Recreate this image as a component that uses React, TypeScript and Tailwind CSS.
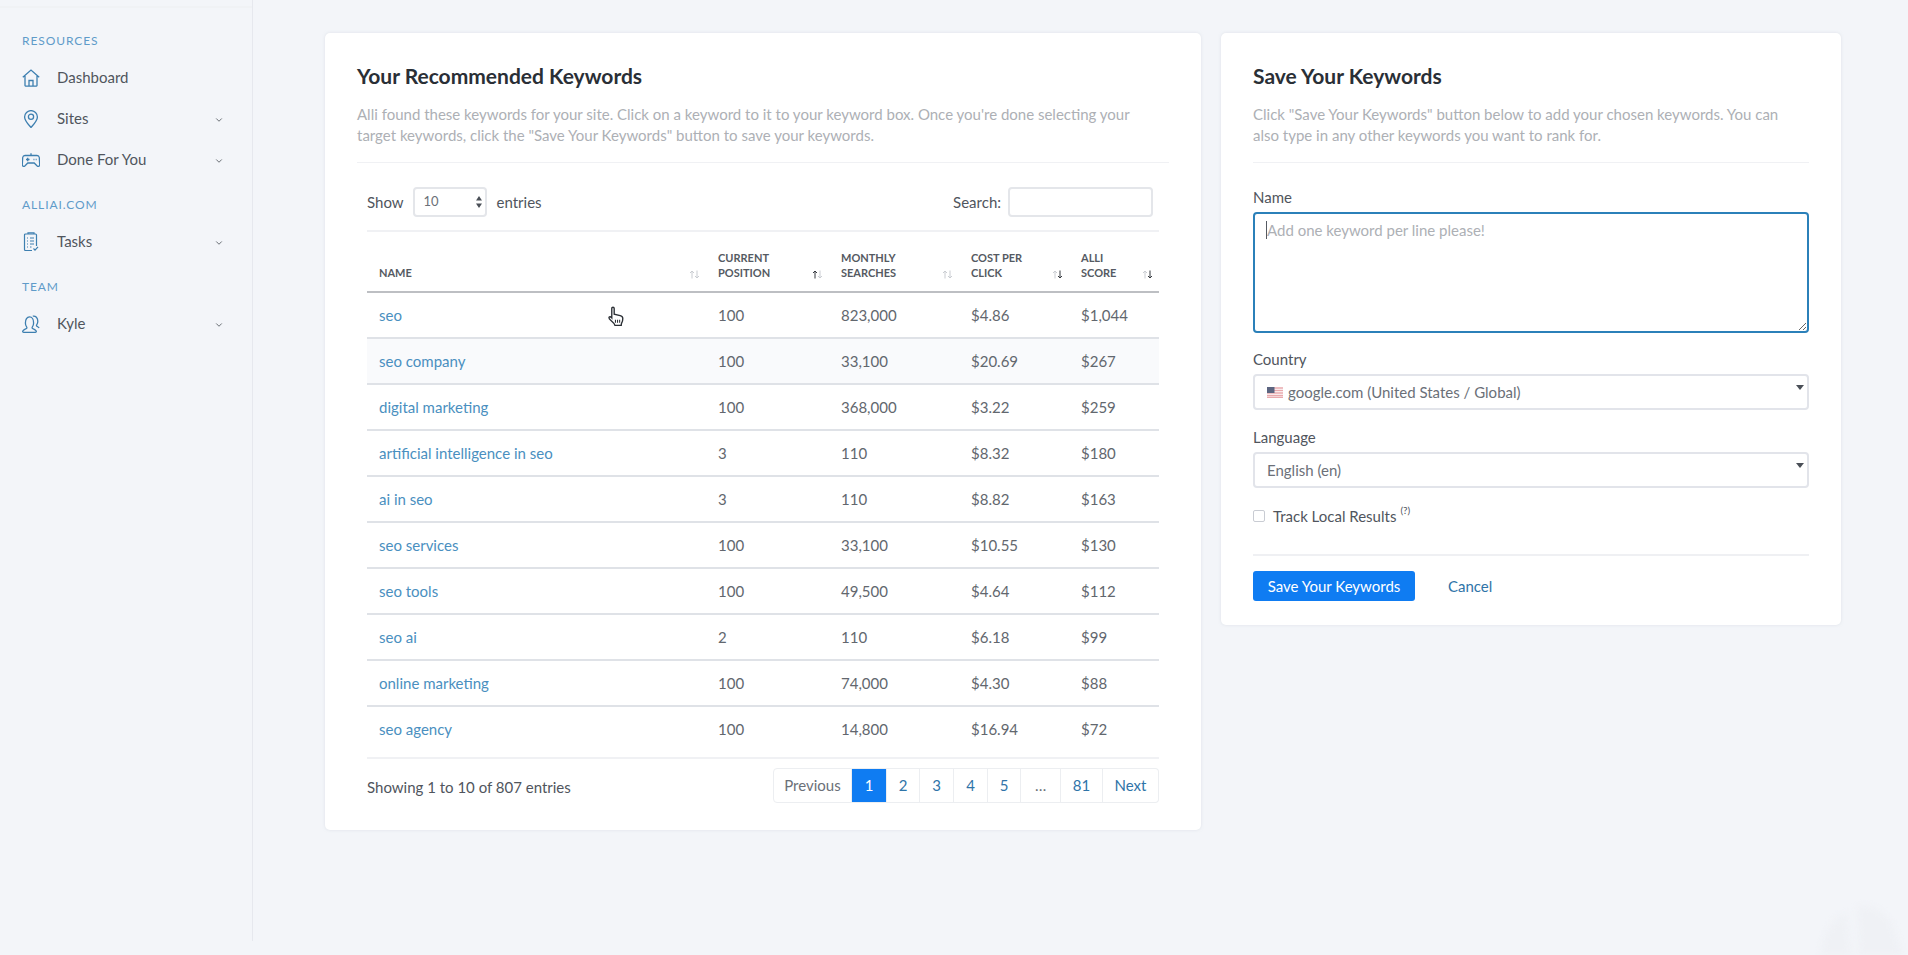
import { ChevronDown } from "lucide-react";

const rows = [
  ["seo", "100", "823,000", "$4.86", "$1,044"],
  ["seo company", "100", "33,100", "$20.69", "$267"],
  ["digital marketing", "100", "368,000", "$3.22", "$259"],
  ["artificial intelligence in seo", "3", "110", "$8.32", "$180"],
  ["ai in seo", "3", "110", "$8.82", "$163"],
  ["seo services", "100", "33,100", "$10.55", "$130"],
  ["seo tools", "100", "49,500", "$4.64", "$112"],
  ["seo ai", "2", "110", "$6.18", "$99"],
  ["online marketing", "100", "74,000", "$4.30", "$88"],
  ["seo agency", "100", "14,800", "$16.94", "$72"],
];

const pages = [
  { label: "Previous", width: "w-[79px]", className: "text-[#6b7078] rounded-l-[4px]" },
  { label: "1", width: "w-[35px]", className: "bg-[#0f7cf2] text-white border-[#0f7cf2]" },
  { label: "2", width: "w-[33px]", className: "text-[#2f74a8]" },
  { label: "3", width: "w-[34px]", className: "text-[#2f74a8]" },
  { label: "4", width: "w-[34px]", className: "text-[#2f74a8]" },
  { label: "5", width: "w-[33px]", className: "text-[#2f74a8]" },
  { label: "…", width: "w-[40px]", className: "text-[#6b7078]" },
  { label: "81", width: "w-[42px]", className: "text-[#2f74a8]" },
  { label: "Next", width: "w-[56px]", className: "text-[#2f74a8] rounded-r-[4px]" },
];

function SortArrows({ up = "#c9ccd1", down = "#c9ccd1" }: { up?: string; down?: string }) {
  return (
    <svg width="11" height="9" viewBox="0 0 11 9" fill="none" strokeWidth="1" className="shrink-0 mb-[1px]">
      <path d="M3 8.5V1M1 3l2-2 2 2" stroke={up} />
      <path d="M8 .5V8M6 6l2 2 2-2" stroke={down} />
    </svg>
  );
}

const iconClass = "shrink-0 text-[#3d7fb0]";

function HomeIcon() {
  return (
    <svg width="18" height="18" viewBox="0 0 18 18" fill="none" stroke="currentColor" strokeWidth="1.3" className={iconClass}>
      <path d="M.8 8.2 9 1l8.2 7.2M3 7v9.6c0 .3.2.5.5.5h11c.3 0 .5-.2.5-.5V7" />
      <path d="M7 17v-5.5h4V17" />
    </svg>
  );
}

function PinIcon() {
  return (
    <svg width="18" height="18" viewBox="0 0 18 18" fill="none" stroke="currentColor" strokeWidth="1.3" className={iconClass}>
      <path d="M9 17.500C6.500 14.600 2.600 10.600 2.600 6.900A6.400 6.400 0 0 1 9 .6a6.400 6.400 0 0 1 6.400 6.300c0 3.700-3.900 7.700-6.400 10.600Z" />
      <circle cx="9" cy="6.800" r="2.600" />
    </svg>
  );
}

function GamepadIcon() {
  return (
    <svg width="18" height="16" viewBox="0 0 18 16" fill="none" stroke="currentColor" strokeWidth="1.3" className={iconClass}>
      <path d="M3 3.500h12c1.300 0 2.100.8 2.300 2l.4 7.300c.1 1.400-1.500 2-2.500 1.100l-3-2.900H5.800l-3 2.900c-1 .9-2.600.3-2.500-1.100l.4-7.300c.2-1.200 1-2 2.300-2Z" />
      <path d="M9 3.500V1.200M4 7.500h3.500M5.700 5.800v3.400M11.500 7.500h.9M13.700 7.500h.9" />
    </svg>
  );
}

function TasksIcon() {
  return (
    <svg width="18" height="20" viewBox="0 0 18 20" fill="none" stroke="currentColor" strokeWidth="1.2" className={iconClass}>
      <path d="M10 18.500H3.500a1 1 0 0 1-1-1V3a1 1 0 0 1 1-1h10a1 1 0 0 1 1 1v11" />
      <path d="M6 2V.8h6V2M5 6h1M8 6h4M5 9h1M8 9h4M5 12h1M8 12h4M5 15h1M8 15h1.500" />
      <path d="m11.500 16.500 1.500 1.600 3-3.300" />
    </svg>
  );
}

function UserIcon() {
  return (
    <svg width="18" height="18" viewBox="0 0 18 18" fill="none" stroke="currentColor" strokeWidth="1.3" className={iconClass}>
      <path d="M6.500 17.300H1.700c-.8 0-1.200-.7-.9-1.300.7-1.400 2.300-1.800 3.700-2.500.6-.3.500-1.200.1-1.700-.8-1-1.200-2.300-1.200-3.900 0-3.200 1.500-6 4.100-6s4.100 2.800 4.100 6c0 1.600-.4 2.900-1.200 3.900-.4.500-.5 1.400.1 1.700 1.400.7 3 1.100 3.700 2.500.3.600-.1 1.300-.9 1.300H6.500Z" />
      <path d="M10.800 1.200c2.900-.6 5 1.800 5 5 0 1.500-.4 2.700-1.100 3.600-.4.500-.3 1.100.2 1.400.8.500 1.800.9 2.200 1.800" />
    </svg>
  );
}

function NavLabel({ children, className = "" }: { children: string; className?: string }) {
  return (
    <div className={`text-[12px] leading-[16px] tracking-[0.9px] text-[#5f9bc9] ${className}`}>
      {children}
    </div>
  );
}

function NavItem({ icon, label, chevron = true }: { icon: React.ReactNode; label: string; chevron?: boolean }) {
  return (
    <div className="flex items-center h-[41px] text-[15px] text-[#50555d]">
      <div className="w-[18px] flex justify-center">{icon}</div>
      <span className="ml-[17px]">{label}</span>
      {chevron && <ChevronDown size={10} strokeWidth={2.2} className="ml-auto mr-[28px] mt-[2px] text-[#5d6269]" />}
    </div>
  );
}

function Sidebar() {
  return (
    <aside className="w-[253px] h-[941px] shrink-0 border-r border-[#e6e8ee]">
      <div className="h-[8px] border-b-2 border-[#f0f2f5]" />
      <div className="pl-[22px] pt-[25px]">
        <NavLabel className="mb-[8px]">RESOURCES</NavLabel>
        <NavItem icon={<HomeIcon />} label="Dashboard" chevron={false} />
        <NavItem icon={<PinIcon />} label="Sites" />
        <NavItem icon={<GamepadIcon />} label="Done For You" />
        <NavLabel className="mt-[17px] mb-[8px]">ALLIAI.COM</NavLabel>
        <NavItem icon={<TasksIcon />} label="Tasks" />
        <NavLabel className="mt-[17px] mb-[8px]">TEAM</NavLabel>
        <NavItem icon={<UserIcon />} label="Kyle" />
      </div>
    </aside>
  );
}

function HeaderCell({ lines, up, down }: { lines: string[]; up?: string; down?: string }) {
  return (
    <th className="p-0 align-bottom font-normal">
      <div className="flex items-end justify-between pl-[12px] pr-[6px] pb-[11px]">
        <div className="text-left text-[11px] leading-[15px] font-bold text-[#555a62]">
          {lines.map((line) => (
            <div key={line}>{line}</div>
          ))}
        </div>
        <SortArrows up={up} down={down} />
      </div>
    </th>
  );
}

function KeywordsCard() {
  return (
    <section className="relative w-[876px] h-[797px] shrink-0 bg-white rounded-[5px] shadow-[0_0_3px_rgba(200,205,215,0.5)] px-[32px] pt-[29px]">
      <h2 className="text-[21px] leading-[28px] font-bold text-[#2a2f36]">Your Recommended Keywords</h2>
      <p className="mt-[14px] text-[15px] leading-[21px] text-[#adb0b5]">
        Alli found these keywords for your site. Click on a keyword to it to your keyword box. Once you're done selecting your target keywords, click the "Save Your Keywords" button to save your keywords.
      </p>
      <div className="mt-[16px] h-[1px] bg-[#f0f1f4]" />
      <div className="ml-[10px] mr-[10px]">
        <div className="flex items-center pt-[24px] pb-[13px] border-b-2 border-[#f0f1f4] text-[15px] text-[#50555d]">
          <span>Show</span>
          <div className="relative ml-[9px] mr-[10px]">
            <select
              defaultValue="10"
              className="appearance-none block w-[74px] h-[30px] pl-[9px] text-[13px] text-[#6b7078] border-2 border-[#e4e6ea] rounded-[4px] bg-white"
            >
              <option>10</option>
            </select>
            <svg width="6" height="12" viewBox="0 0 6 12" className="absolute right-[5px] top-[9px] fill-[#4a4f57]">
              <path d="M3 0l3 4.500H0zM3 12 0 7.500h6z" />
            </svg>
          </div>
          <span>entries</span>
          <span className="ml-auto">Search:</span>
          <input className="ml-[7px] mr-[6px] w-[145px] h-[30px] border-2 border-[#e4e6ea] rounded-[4px] bg-white" />
        </div>
        <table className="w-[792px] table-fixed border-collapse">
          <colgroup>
            <col className="w-[339px]" />
            <col className="w-[123px]" />
            <col className="w-[130px]" />
            <col className="w-[110px]" />
            <col className="w-[90px]" />
          </colgroup>
          <thead>
            <tr className="h-[60px] border-b-2 border-[#bdbfc3]">
              <HeaderCell lines={["NAME"]} />
              <HeaderCell lines={["CURRENT", "POSITION"]} up="#34383e" />
              <HeaderCell lines={["MONTHLY", "SEARCHES"]} />
              <HeaderCell lines={["COST PER", "CLICK"]} down="#34383e" />
              <HeaderCell lines={["ALLI", "SCORE"]} down="#34383e" />
            </tr>
          </thead>
          <tbody className="text-[15px] text-[#62676e]">
            {rows.map((row, i) => (
              <tr key={row[0]} className={`h-[46px] ${i < 9 ? "border-b-2 border-[#dfe2e7]" : ""} ${i === 1 ? "bg-[#f9fafc]" : ""}`}>
                <td className="pl-[12px] text-[#4a8fc0]">{row[0]}</td>
                {row.slice(1).map((cell, j) => (
                  <td key={j} className="pl-[12px]">
                    {cell}
                  </td>
                ))}
              </tr>
            ))}
          </tbody>
        </table>
        <div className="mt-[5px] flex items-center justify-between border-t-2 border-[#f0f1f4] pt-[9px]">
          <span className="mt-[3px] text-[15px] text-[#50555d]">Showing 1 to 10 of 807 entries</span>
          <div className="flex h-[35px] text-[15px]">
            {pages.map((page) => (
              <div
                key={page.label}
                className={`flex items-center justify-center border border-l-0 first:border-l border-[#eceef1] ${page.width} ${page.className}`}
              >
                {page.label}
              </div>
            ))}
          </div>
        </div>
      </div>
      {/* mouse cursor */}
      <svg width="17" height="21" viewBox="0 0 16 20" className="absolute left-[283px] top-[273px]" fill="#fff" stroke="#2b2f35" strokeWidth="1.300">
        <path d="M3.500 10.500V2.300c0-1.500 2.300-1.500 2.300 0v5.500l5.700 1.300c1.500.4 2.500 1.200 2.500 2.700 0 1.500-.3 3-1 4.200-.4.800-.5 1.500-.5 2.500H6.500c-.5-1.700-1.800-3-3.500-4.400-1.500-1.200-2.300-2-2.200-3 .1-1.100 1.500-1.300 2.700.2Z" />
        <path d="M7 13v3M9 13v3M11 13v3" strokeWidth="1" />
      </svg>
    </section>
  );
}

function SelectField({ label, value, flag }: { label: string; value: string; flag?: boolean }) {
  return (
    <div>
      <div className="text-[15px] leading-[20px] text-[#50555d]">{label}</div>
      <div className="relative mt-[5px] flex items-center h-[36px] pl-[12px] border-2 border-[#e2e4ea] rounded-[4px] text-[15px] text-[#6b7078]">
        {flag && (
          <svg width="16" height="11" viewBox="0 0 16 11" className="mr-[4px] shrink-0">
            <rect width="16" height="11" fill="#fff" />
            <path d="M0 1h16M0 3.500h16M0 6h16M0 8.500h16M0 10.500h16" stroke="#e9a9ad" strokeWidth="1.300" />
            <rect width="7.500" height="6" fill="#5c6580" />
          </svg>
        )}
        {flag ? <span className="ml-[1px]">{value}</span> : value}
        <svg width="8" height="5" viewBox="0 0 8 5" className="absolute right-[3px] top-[9px] fill-[#4a4f57]">
          <path d="M0 0h8L4 5z" />
        </svg>
      </div>
    </div>
  );
}

function SaveCard() {
  return (
    <section className="w-[620px] h-[592px] shrink-0 bg-white rounded-[5px] shadow-[0_0_3px_rgba(200,205,215,0.5)] px-[32px] pt-[29px]">
      <h2 className="text-[21px] leading-[28px] font-bold text-[#2a2f36]">Save Your Keywords</h2>
      <p className="mt-[14px] text-[15px] leading-[21px] text-[#adb0b5] pr-[10px]">
        Click "Save Your Keywords" button below to add your chosen keywords. You can also type in any other keywords you want to rank for.
      </p>
      <div className="mt-[16px] h-[1px] bg-[#f0f1f4]" />
      <div className="mt-[24px] text-[15px] leading-[20px] text-[#50555d]">Name</div>
      <div className="relative mt-[5px]">
        <textarea
          placeholder="Add one keyword per line please!"
          className="block w-[556px] h-[121px] px-[12px] py-[6px] border-2 border-[#2b80b9] rounded-[4px] text-[15px] leading-[21px] placeholder:text-[#adb0b5] outline-none"
        />
        <div className="absolute left-[13px] top-[9px] w-[1px] h-[18px] bg-[#555a62]" />
      </div>
      <div className="mt-[16px]">
        <SelectField label="Country" value="google.com (United States / Global)" flag />
      </div>
      <div className="mt-[17px]">
        <SelectField label="Language" value="English (en)" />
      </div>
      <div className="mt-[18px] flex items-center h-[20px] text-[15px] text-[#50555d]">
        <input type="checkbox" className="appearance-none w-[12px] h-[12px] border border-[#c9ccd3] rounded-[2px] bg-white" />
        <span className="ml-[8px]">Track Local Results</span>
        <sup className="ml-[4px] text-[10px] top-[-0.6em]">(?)</sup>
      </div>
      <div className="mt-[28px] h-[2px] bg-[#eff0f3]" />
      <div className="mt-[15px] flex items-center">
        <button className="w-[162px] h-[30px] bg-[#0f7cf2] rounded-[3px] text-[15px] text-white">Save Your Keywords</button>
        <span className="ml-[33px] text-[15px] text-[#2f74a8]">Cancel</span>
      </div>
    </section>
  );
}

export default function App() {
  return (
    <div className="relative flex w-[1908px] h-[955px] overflow-hidden bg-[#f3f5f9] font-['Lato',sans-serif]">
      <Sidebar />
      <main className="flex items-start gap-[20px] pl-[72px] pt-[33px]">
        <KeywordsCard />
        <SaveCard />
      </main>
      {/* faint logo in the corner */}
      <svg width="100" height="60" viewBox="0 0 90 60" className="absolute right-0 bottom-0 fill-[#eff1f5] blur-[3px]">
        <path d="M8 60C10 36 22 22 34 18l4 42zM46 60l-2-48c14-4 30 4 36 20l10 28z" />
      </svg>
    </div>
  );
}
